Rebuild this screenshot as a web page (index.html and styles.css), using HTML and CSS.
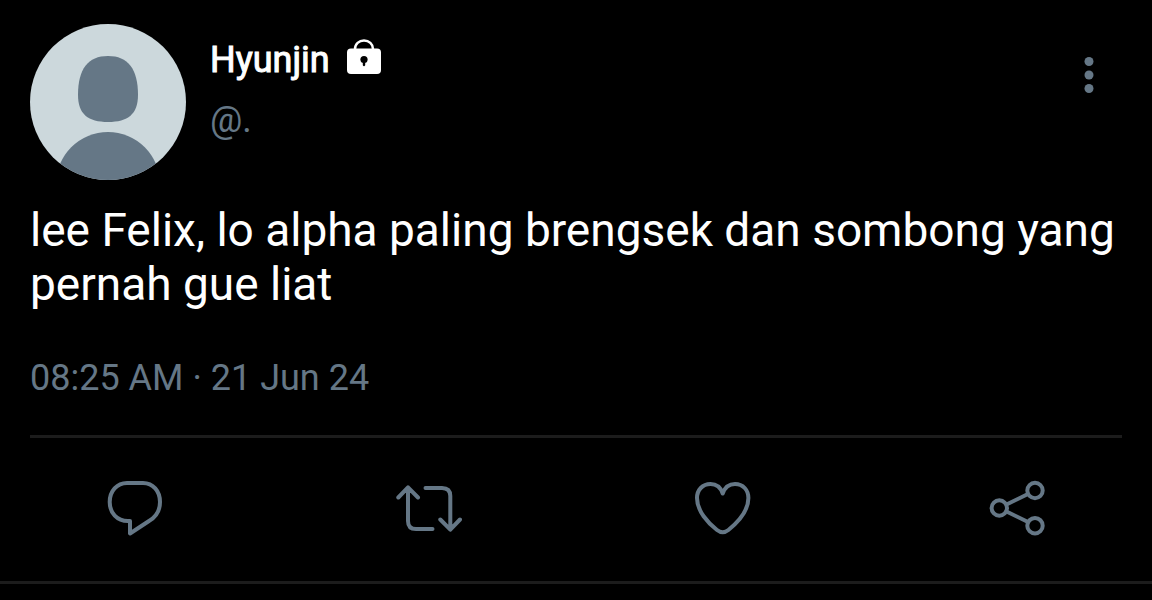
FILE: index.html
```html
<!DOCTYPE html>
<html lang="id">
<head>
<meta charset="utf-8">
<meta name="viewport" content="width=device-width, initial-scale=1">
<title>Hyunjin</title>
<link rel="stylesheet" href="styles.css">
</head>
<body>
<article class="post">
  <header class="post-header">
    <svg class="avatar" viewBox="0 0 156 156" role="img" aria-label="Avatar">
      <defs><clipPath id="round"><circle cx="78" cy="78" r="78"/></clipPath></defs>
      <g clip-path="url(#round)">
        <rect width="156" height="156" fill="#ccd8dc"/>
        <path fill="#657786" d="M78 32C98 32 108 45 108 71C108 90 98 98 78 98C58 98 48 90 48 71C48 45 58 32 78 32Z"/>
        <circle cx="78" cy="160" r="52" fill="#657786"/>
      </g>
    </svg>
    <div class="identity">
      <div class="name-row">
        <span class="name">Hyunjin</span>
        <svg class="lock" viewBox="0 0 36 36" role="img" aria-label="Protected">
          <path d="M9 12V10C9 5 13 1.500 18 1.500S27 5 27 10V12" fill="none" stroke="#fff" stroke-width="2.500"/>
          <rect x="1" y="9.500" width="34" height="25.500" rx="4" fill="#fff"/>
          <circle cx="18" cy="20.500" r="3.600"/>
          <path d="M16.800 22H19.200V26.300Q18 28.300 16.800 26.300Z"/>
        </svg>
      </div>
      <span class="handle">@.</span>
    </div>
    <button class="icon-button menu" type="button" aria-label="More">
      <svg class="icon" viewBox="0 0 66 60">
        <g class="dots"><circle cx="33" cy="16.5" r="4.5"/><circle cx="33" cy="30" r="4.5"/><circle cx="33" cy="43.5" r="4.5"/></g>
      </svg>
    </button>
  </header>
  <p class="message">lee Felix, lo alpha paling brengsek dan sombong yang pernah gue liat</p>
  <time class="date" datetime="2024-06-21T08:25">08:25 AM · 21 Jun 24</time>
  <div class="actions">
    <button class="icon-button" type="button" aria-label="Reply">
      <svg class="icon" viewBox="0 0 66 60"><path d="M25 4H41C51 4 58 12 58 23C58 31 54 38 47 42L28 54.500V42H26C15 42 7.700 34 7.700 23C7.700 12 15 4 25 4Z"/></svg>
    </button>
    <button class="icon-button" type="button" aria-label="Repost">
      <svg class="icon" viewBox="0 0 66 60"><path d="M2.300 18.500L12 8.300L22 18.500M12 8.500V42Q12 50 20 50H36.500M29.500 9H46Q54.300 9 54.300 17V50.500M44.300 40.500L54.300 50.700L64 40.500"/></svg>
    </button>
    <button class="icon-button" type="button" aria-label="Like">
      <svg class="icon" viewBox="0 0 66 60"><path d="M32.700 14.500C30.500 8 26 5 20.500 5C12.500 5 7 11 7 19C7 32 18 44 27 51Q32.700 55.500 38.400 51C47 44 58.400 32 58.400 19C58.400 11 53 5 45 5C39.500 5 35 8 32.700 14.500Z"/></svg>
    </button>
    <button class="icon-button" type="button" aria-label="Share">
      <svg class="icon" viewBox="0 0 66 60"><circle cx="15.300" cy="29" r="7.700"/><circle cx="51" cy="11.500" r="7.700"/><circle cx="51" cy="46.700" r="7.700"/><path d="M22.500 25.500L44 15M22.500 32.500L44 43"/></svg>
    </button>
  </div>
</article>
</body>
</html>
```
FILE: styles.css
```css
body {
  margin: 0;
  background: #000;
  color: #fff;
  font-family: Roboto, "Liberation Sans", sans-serif;
}

.post {
  padding: 24px 30px 42px;
  border-bottom: 3px solid #1c1c1c;
}

.post-header {
  display: flex;
  align-items: flex-start;
  gap: 24px;
}

.avatar {
  width: 156px;
  height: 156px;
  flex: none;
}

.identity {
  flex: 1;
  padding-top: 15px;
  font-size: 36px;
  line-height: 42px;
}

.name-row {
  display: flex;
  gap: 16px;
  margin-bottom: 18px;
}

.name {
  -webkit-text-stroke: 1px #fff;
}

.lock {
  width: 36px;
  height: 36px;
}

.handle,
.date {
  color: #657786;
}

.icon-button {
  display: block;
  padding: 0;
  border: 0;
  background: none;
  cursor: pointer;
}

.menu {
  margin-top: 21px;
}

.icon {
  display: block;
  width: 66px;
  height: 60px;
  fill: none;
  stroke: #657786;
  stroke-width: 4;
  stroke-linecap: round;
  stroke-linejoin: round;
}

.dots {
  fill: #657786;
  stroke: none;
}

.message {
  margin: 23px 0 46px;
  font-size: 46px;
  line-height: 54px;
}

.date {
  display: block;
  font-size: 36px;
  line-height: 42px;
}

.actions {
  display: flex;
  justify-content: space-between;
  margin-top: 36px;
  padding: 41px 72px 0;
  border-top: 3px solid #1c1c1c;
}
```
